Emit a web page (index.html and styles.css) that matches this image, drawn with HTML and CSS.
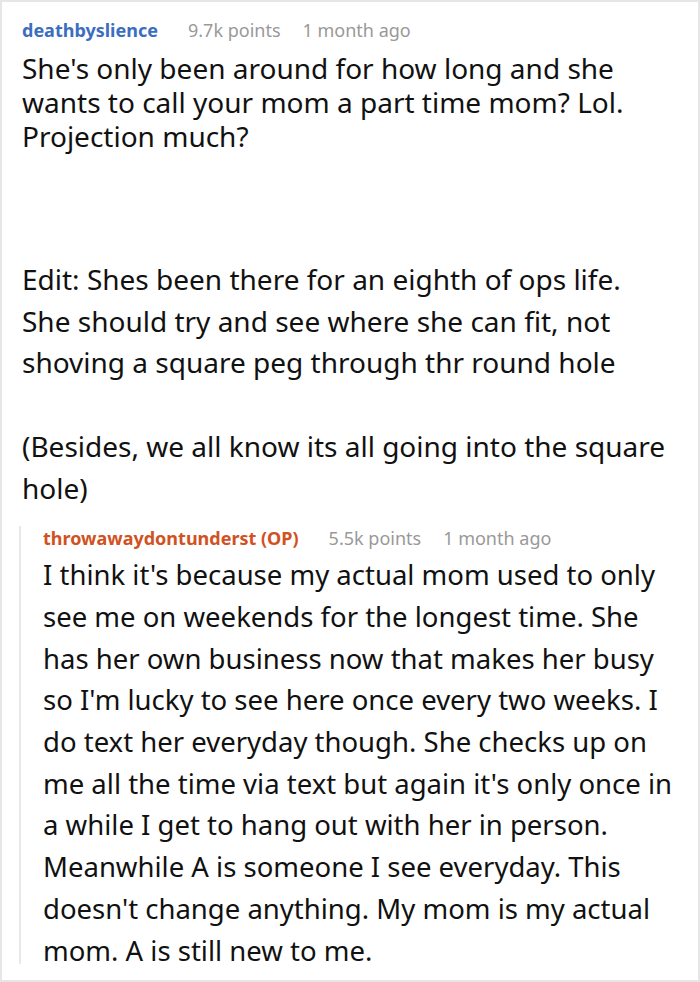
FILE: index.html
```html
<!DOCTYPE html>
<html>
<head>
<meta charset="utf-8">
<link rel="stylesheet" href="styles.css">
</head>
<body>
<div class="page">
  <div class="comment">
    <div class="meta">
      <span class="author">deathbyslience</span>
      <span class="info">9.7k points</span>
      <span class="info">1 month ago</span>
    </div>
    <p class="text main tight">She's only been around for how long and she wants to call your mom a part time mom? Lol. Projection much?</p>
    <p class="text main edit">Edit: Shes been there for an eighth of ops life. She should try and see where she can fit, not shoving a square peg through thr round hole</p>
    <p class="text main gap">(Besides, we all know its all going into the square hole)</p>
    <div class="reply">
      <div class="meta">
        <span class="author op">throwawaydontunderst (OP)</span>
        <span class="info">5.5k points</span>
        <span class="info">1 month ago</span>
      </div>
      <p class="text">I think it's because my actual mom used to only see me on weekends for the longest time. She has her own business now that makes her busy so I'm lucky to see here once every two weeks. I do text her everyday though. She checks up on me all the time via text but again it's only once in a while I get to hang out with her in person. Meanwhile A is someone I see everyday. This doesn't change anything. My mom is my actual mom. A is still new to me.</p>
    </div>
  </div>
</div>
</body>
</html>
```

FILE: styles.css
```css
html, body {
  margin: 0;
  padding: 0;
  background: #ffffff;
}
body {
  font-family: "Noto Sans", "Open Sans", sans-serif;
  color: #111111;
}
.page {
  box-sizing: border-box;
  width: 700px;
  height: 982px;
  border: 2px solid #e6e6e6;
  overflow: hidden;
}
.comment {
  padding: 16px 20px 0 20px;
}
.meta {
  display: flex;
  align-items: baseline;
  gap: 22px;
  font-size: 18px;
  line-height: 24px;
}
.author {
  font-weight: 700;
  color: #3c6ebf;
  margin-right: 8px;
}
.author.op {
  color: #d2511f;
}
.info {
  color: #999999;
}
.text {
  margin: 0;
  font-size: 28px;
  line-height: 41.7px;
}
.text.main {
  max-width: 648px;
}
.text.tight {
  margin-top: 9px;
  line-height: 34px;
}
.text.edit {
  margin-top: 106px;
}
.text.gap {
  margin-top: 41.7px;
}
.reply {
  margin-top: 17px;
  margin-left: -3px;
  margin-right: -12px;
  height: 438px;
  border-left: 2px solid #e8e8e8;
  padding-left: 22px;
  padding-right: 0;
}
.reply .text {
  margin-top: 4px;
  font-size: 27.5px;
}
```
